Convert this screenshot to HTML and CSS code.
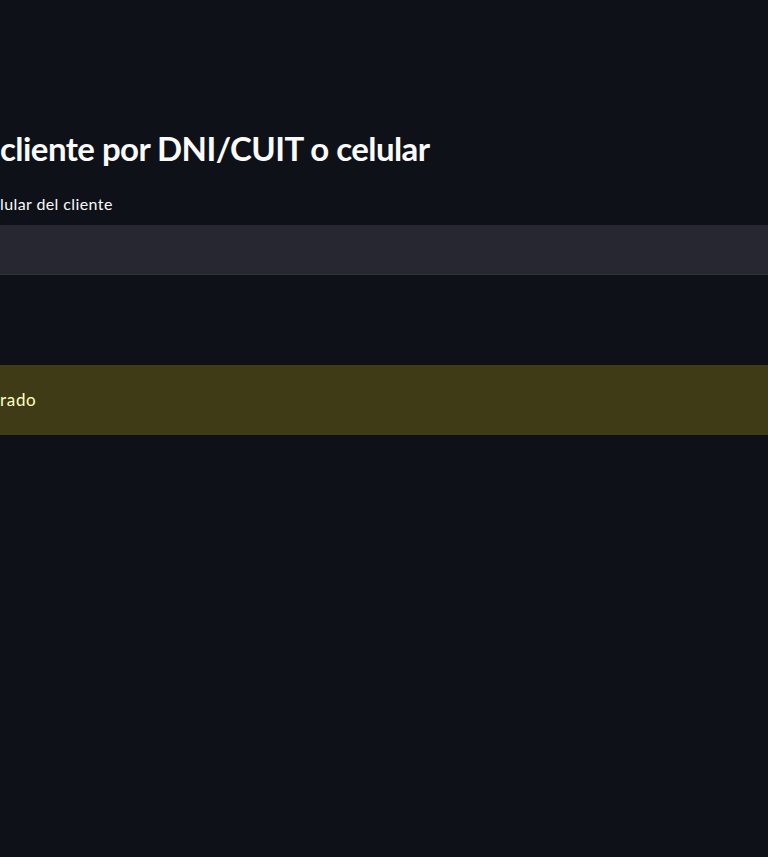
FILE: index.html
```html
<!DOCTYPE html>
<html lang="es">
<head>
<meta charset="utf-8">
<title>Buscar cliente</title>
<link rel="stylesheet" href="styles.css">
</head>
<body>
<main class="app">
  <section class="block">
    <h2 class="title">cliente por DNI/CUIT o celular</h2>
    <div class="field">
      <label class="field-label" for="q">lular del cliente</label>
      <div class="input-wrap"><input id="q" class="input" type="text"></div>
    </div>
    <div class="alert">rado</div>
  </section>
</main>
</body>
</html>
```
FILE: styles.css
```css
html, body {
  margin: 0;
  padding: 0;
  background: #0e1117;
  overflow: hidden;
}
body {
  font-family: Lato, "Noto Sans", sans-serif;
  color: #fafafa;
  height: 857px;
}
.app {
  padding-top: 124px;
}
.block {
  display: flex;
  flex-direction: column;
}
.title {
  margin: 0;
  font-size: 33px;
  font-weight: 700;
  letter-spacing: -0.55px;
  line-height: 48px;
  white-space: nowrap;
}
.field {
  margin-top: 22px;
  display: flex;
  flex-direction: column;
}
.field-label {
  font-size: 16px;
  letter-spacing: 0.4px;
  line-height: 20px;
  height: 31px;
  white-space: nowrap;
}
.input-wrap {
  height: 50px;
  background: #262730;
  border-bottom: 1px solid #31333c;
  box-sizing: border-box;
}
.input {
  width: 100%;
  height: 100%;
  border: 0;
  padding: 0;
  background: transparent;
  color: #fafafa;
  outline: none;
}
.alert {
  margin-top: 90px;
  height: 70px;
  box-sizing: border-box;
  background: #3e3b16;
  color: #ffffc2;
  font-size: 17px;
  letter-spacing: 0.7px;
  display: flex;
  align-items: center;
  padding-bottom: 2px;
  white-space: nowrap;
}
```
